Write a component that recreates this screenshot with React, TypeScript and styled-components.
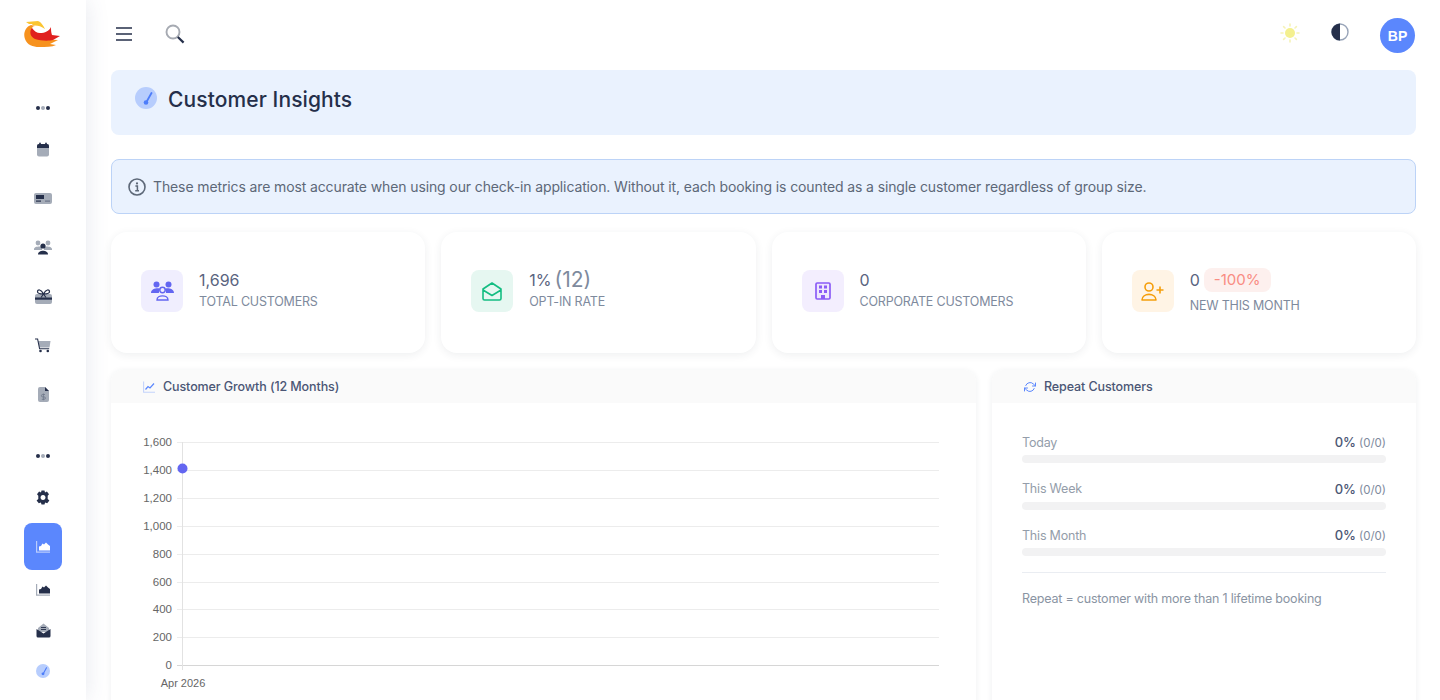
import React from "react";
import styled, { createGlobalStyle } from "styled-components";
import { FiRefreshCw } from "react-icons/fi";

const FONT = `"Inter", "Liberation Sans", sans-serif`;
const DARK = "#252f4a";
const MUTED = "#a5acb8";

const GlobalStyle = createGlobalStyle`
  html, body {
    margin: 0;
    height: 100%;
    overflow: hidden;
    background: #fff;
  }
  body {
    font-family: ${FONT};
  }
`;

const Shell = styled.div`
  display: flex;
  height: 700px;
  overflow: hidden;
`;

const Sidebar = styled.aside`
  width: 86px;
  flex: none;
  background: #fff;
  box-shadow: 0 0 22px rgba(60, 80, 120, 0.13);
  z-index: 2;
  display: flex;
  flex-direction: column;
  align-items: center;
`;

const LogoBox = styled.div`
  height: 90px;
  width: 100%;
  display: flex;
  justify-content: center;
  padding-top: 21px;
  box-sizing: border-box;
`;

const NavItem = styled.div<{ $h: number; $active?: boolean; $mt?: number }>`
  width: 38px;
  height: ${(p) => p.$h}px;
  margin-top: ${(p) => p.$mt ?? 0}px;
  flex: none;
  display: flex;
  align-items: center;
  justify-content: center;
  border-radius: 8px;
  background: ${(p) => (p.$active ? "#5b87fd" : "transparent")};
`;

const Main = styled.main`
  flex: 1;
  min-width: 0;
  padding: 0 24px 0 25px;
`;

const Topbar = styled.header`
  height: 70px;
  display: flex;
  align-items: center;
  gap: 32px;
`;

const TopLeft = styled.div`
  display: flex;
  align-items: center;
  gap: 33px;
  padding: 0 0 2px 5px;
  flex: 1;
`;

const TopRight = styled.div`
  display: flex;
  align-items: center;
  padding: 1px 1px 0 0;
`;

const ThemeIcon = styled.div<{ $mr: number; $up?: number }>`
  display: flex;
  margin-right: ${(p) => p.$mr}px;
  margin-top: -${(p) => p.$up ?? 0}px;
`;

const Avatar = styled.div`
  width: 35px;
  height: 35px;
  border-radius: 50%;
  background: #5b87fd;
  color: #fff;
  font: 700 14px "Liberation Sans", sans-serif;
  display: flex;
  align-items: center;
  justify-content: center;
`;

const PageHead = styled.div`
  height: 65px;
  box-sizing: border-box;
  padding: 17px 24px 0;
  border-radius: 8px;
  background: #eaf2fe;
  display: flex;
  align-items: flex-start;
  gap: 11px;
`;

const PageTitle = styled.h1`
  margin: -1px 0 0;
  font-size: 21px;
  line-height: 27px;
  font-weight: 500;
  letter-spacing: 0.1px;
  color: ${DARK};
`;

const Notice = styled.div`
  margin-top: 24px;
  height: 55px;
  box-sizing: border-box;
  border: 1px solid #bcd3f7;
  border-radius: 8px;
  background: #eaf2fe;
  padding: 0 16px;
  display: flex;
  align-items: center;
  gap: 7px;
  font-size: 14px;
  color: #5d6878;
  letter-spacing: -0.12px;
`;

const StatGrid = styled.section`
  margin-top: 18px;
  display: grid;
  grid-template-columns: repeat(4, 1fr);
  gap: 16px;
`;

const StatCard = styled.div`
  height: 121px;
  box-sizing: border-box;
  border-radius: 16px;
  background: #fff;
  box-shadow: 0 2px 8px rgba(40, 50, 70, 0.08);
  padding: 0 30px 3px;
  display: flex;
  align-items: center;
  gap: 16px;
`;

const StatIconBox = styled.div<{ $bg: string }>`
  width: 42px;
  height: 42px;
  flex: none;
  border-radius: 8px;
  background: ${(p) => p.$bg};
  display: flex;
  align-items: center;
  justify-content: center;
`;

const StatText = styled.div`
  margin-bottom: 3px;
`;

const StatValue = styled.div`
  display: flex;
  align-items: center;
  gap: 3px;
  font-size: 16px;
  line-height: 22px;
  color: #5a6480;
`;

const Sub = styled.span`
  font-size: 21px;
  color: #7e8a9d;
`;

const Badge = styled.span`
  height: 24px;
  margin: 2px 0 3px 1px;
  padding: 0 10px;
  border-radius: 8px;
  background: #fdf0ee;
  color: #f98c83;
  font-size: 15px;
  display: flex;
  align-items: center;
`;

const StatLabel = styled.div`
  margin-top: 2px;
  font-size: 12.5px;
  line-height: 17px;
  letter-spacing: -0.2px;
  text-transform: uppercase;
  color: #7e8a9d;
`;

const PanelRow = styled.section`
  margin-top: 17px;
  display: grid;
  grid-template-columns: 865px 1fr;
  gap: 16px;
`;

const Panel = styled.div`
  height: 420px;
  border-radius: 12px;
  background: #fff;
  box-shadow: 0 1px 6px rgba(40, 50, 70, 0.08);
  overflow: hidden;
`;

const PanelHead = styled.div`
  height: 33px;
  background: #fafafa;
  padding: 0 32px;
  display: flex;
  align-items: center;
  gap: 8px;
  font-size: 12.5px;
  font-weight: 500;
  letter-spacing: -0.1px;
  color: #4b5675;
`;

const ChartBody = styled.div`
  padding: 23px 0 0 0;
`;

const RepeatBody = styled.div`
  padding: 31px 30px 0;
`;

const RepeatRow = styled.div`
  & + & {
    margin-top: 17.5px;
  }
`;

const RepeatLine = styled.div`
  display: flex;
  justify-content: space-between;
  align-items: center;
  height: 16px;
  margin-bottom: 5px;
  font-size: 12.5px;
  letter-spacing: -0.2px;
  color: #949daa;
`;

const RepeatValue = styled.span`
  font-size: 13px;
  font-weight: 500;
  letter-spacing: 0;
  color: #4b5675;

  small {
    font-size: 11.5px;
    font-weight: 400;
    color: #7e8a9d;
    margin-left: 3px;
  }
`;

const Track = styled.div`
  height: 8px;
  border-radius: 4px;
  background: #f2f2f3;
`;

const Divider = styled.hr`
  margin: 16px 0 0;
  border: 0;
  border-top: 1px solid #eaedf2;
`;

const Note = styled.p`
  margin: 18px 0 0;
  font-size: 12.5px;
  line-height: 16px;
  letter-spacing: -0.2px;
  color: #8a94a3;
`;

const Dots = () => (
  <svg width="16" height="6" viewBox="0 0 16 6">
    <circle cx="3" cy="3" r="2" fill={DARK} />
    <circle cx="8" cy="3" r="2" fill={MUTED} />
    <circle cx="13" cy="3" r="2" fill={DARK} />
  </svg>
);

const Logo = () => (
  <svg width="38" height="28" viewBox="0 0 38 28">
    <path d="M2 1 L14 0 C17 1 19 4 21 8 C17 5 13 4 9 4.500 L8 3 L5 3 Z" fill="#fbc531" />
    <path d="M7 4 C1 6 -1 13 1 18 C3 24 9 26 15 26 C22 26 28 26 32 24 L26 23 L34 19 L14 18 C10 17 7 13 8 8 C8 6 9 5 11 5 Z" fill="#f7921e" />
    <path d="M8 7 C5 10 6 16 11 18 C17 20 25 20 29 19 L36 15 L28 14 C27 11 27 9 27 6 C25 10 21 12 16 12 C13 12 10 10 8 7 Z" fill="#e0201f" />
  </svg>
);

const CalendarIcon = () => (
  <svg width="14" height="15" viewBox="0 0 14 15">
    <rect x="1" y="2" width="12" height="12.500" rx="2" fill={MUTED} />
    <path d="M1 6 V4 a2 2 0 0 1 2 -2 h8 a2 2 0 0 1 2 2 v2 z" fill={DARK} />
    <rect x="3.200" y="0.500" width="1.600" height="3" rx=".8" fill={DARK} />
    <rect x="9.200" y="0.500" width="1.600" height="3" rx=".8" fill={DARK} />
  </svg>
);

const TicketIcon = () => (
  <svg width="18" height="11" viewBox="0 0 18 11">
    <rect width="18" height="11" rx="2" fill={MUTED} />
    <rect x="2" y="2" width="8" height="4" fill={DARK} />
    <rect x="2" y="7.500" width="5" height="1.200" fill={DARK} />
    <rect x="11" y="7.500" width="5" height="1.200" fill="#6d7689" />
  </svg>
);

const PeopleIcon = () => (
  <svg width="18" height="15" viewBox="0 0 18 15">
    <circle cx="4" cy="3" r="2.400" fill={MUTED} />
    <circle cx="14" cy="3" r="2.400" fill={MUTED} />
    <path d="M0 9 C0 6 7 6 8 7 L8 10 H0 Z M18 9 C18 6 11 6 10 7 L10 10 H18 Z" fill={MUTED} />
    <circle cx="9" cy="6" r="2.600" fill={DARK} />
    <path d="M4 14.500 C4 9.500 14 9.500 14 14.500 Z" fill={DARK} />
  </svg>
);

const GiftIcon = () => (
  <svg width="17" height="15" viewBox="0 0 17 15">
    <rect y="5" width="17" height="10" rx="2" fill={MUTED} />
    <rect y="8.500" width="17" height="2.200" fill={DARK} />
    <path d="M8.500 5 C6 0 2.500 0 2.500 2.800 C2.500 5 6 5 8.500 5 C11 5 14.500 5 14.500 2.800 C14.500 0 11 0 8.500 5 L6 8.500 M8.500 5 L11 8.500" fill="none" stroke={DARK} strokeWidth="1.200" />
  </svg>
);

const CartIcon = () => (
  <svg width="16" height="15" viewBox="0 0 16 15">
    <path d="M3 3 H15.500 L14.500 9.500 H4.500 Z" fill={MUTED} />
    <path d="M0 1 H2.600 L4.600 10.800 H14.200" fill="none" stroke={DARK} strokeWidth="1.100" />
    <circle cx="5.500" cy="13" r="1.300" fill={DARK} />
    <circle cx="12.800" cy="13" r="1.300" fill={DARK} />
  </svg>
);

const DocIcon = () => (
  <svg width="11" height="15" viewBox="0 0 11 15">
    <path d="M2 0 H7 L11 4 V13 a2 2 0 0 1 -2 2 H2 a2 2 0 0 1 -2 -2 V2 a2 2 0 0 1 2 -2 Z" fill={MUTED} />
    <path d="M7 0 L11 4 H7 Z" fill={DARK} />
    <path d="M7 7.500 H4.600 a1 1 0 0 0 0 2.400 H6.200 a1 1 0 0 1 0 2.400 H3.800 M5.400 6.500 V13.200" fill="none" stroke="#6d7689" strokeWidth=".8" />
  </svg>
);

const GearIcon = () => (
  <svg width="14" height="15" viewBox="0 0 14 15">
    <path fillRule="evenodd" fill={DARK} d="M5.500 0.500 H8.500 L9 2.400 L10.900 1.500 L13 4.200 L11.700 5.800 L11.700 8.900 L13.400 10.500 L11.200 13.300 L9.100 12.600 L8.500 14.500 H5.500 L4.900 12.600 L2.800 13.300 L.6 10.500 L2.300 8.900 L2.300 5.800 L1 4.200 L3.100 1.500 L5 2.400 Z M7 5 a2.500 2.500 0 1 0 .01 0 Z" />
  </svg>
);

const AreaChartIcon = ({ main, axis }: { main: string; axis: string }) => (
  <svg width="14" height="12" viewBox="0 0 14 12">
    <path d="M0.600 0 V11.200 H14" fill="none" stroke={axis} strokeWidth="1.200" />
    <path d="M3 9.500 V5.500 L5 5 L6.500 2.500 L8 3.500 L10 1.500 L12 3.500 L14 5 V9.500 Z" fill={main} />
  </svg>
);

const MailIcon = () => (
  <svg width="15" height="15" viewBox="0 0 15 15">
    <path d="M2 5 L7.500 0.500 L13 5 V9 H2 Z" fill={MUTED} />
    <path d="M5 4.500 H10 M5 6.500 H10" stroke={DARK} strokeWidth=".9" />
    <path d="M0.500 6 L7.500 10.500 L14.500 6 V13 a1.500 1.500 0 0 1 -1.500 1.500 H2 a1.500 1.500 0 0 1 -1.500 -1.500 Z" fill={DARK} />
  </svg>
);

const Gauge = ({ size }: { size: number }) => (
  <svg width={size} height={size} viewBox="0 0 22 22">
    <circle cx="11" cy="11" r="11" fill="#b7cdfd" />
    <path d="M16.500 6 L12 14" stroke="#4d7dfa" strokeWidth="1.800" strokeLinecap="round" />
    <circle cx="11" cy="15.500" r="2.300" fill="#4d7dfa" />
  </svg>
);

const Hamburger = () => (
  <svg width="16" height="14" viewBox="0 0 16 14">
    <path d="M0 1 H16 M0 7 H16 M0 13 H16" stroke={DARK} strokeWidth="1.600" />
  </svg>
);

const Search = () => (
  <svg width="20" height="20" viewBox="0 0 20 20">
    <circle cx="8" cy="8" r="6.500" fill="none" stroke="#a6aab2" strokeWidth="1.900" />
    <path d="M12.800 13 L18.600 18.600" stroke={DARK} strokeWidth="2.200" />
  </svg>
);

const Sun = () => (
  <svg width="20" height="20" viewBox="0 0 20 20">
    <circle cx="10" cy="10" r="5" fill="#f4f08e" />
    <path
      d="M10 1 V3 M10 17 V19 M1 10 H3 M17 10 H19 M3.600 3.600 L5 5 M15 15 L16.400 16.400 M3.600 16.400 L5 15 M15 5 L16.400 3.600"
      stroke="#f6f3b8"
      strokeWidth="1.600"
      strokeLinecap="round"
    />
  </svg>
);

const Contrast = () => (
  <svg width="18" height="18" viewBox="0 0 18 18">
    <circle cx="9" cy="9" r="8" fill="#fff" stroke="#98a4b8" strokeWidth="1.400" />
    <path d="M9 0.400 a8.600 8.600 0 0 0 0 17.200 Z" fill={DARK} />
  </svg>
);

const InfoIcon = () => (
  <svg width="18" height="18" viewBox="0 0 18 18">
    <circle cx="9" cy="9" r="8" fill="none" stroke="#5d6878" strokeWidth="1.600" />
    <circle cx="9" cy="5.400" r="1.100" fill="#5d6878" />
    <path d="M7.400 8 H9.400 V12.600 M7.200 12.800 H11" fill="none" stroke="#5d6878" strokeWidth="1.500" />
  </svg>
);

const TrendIcon = () => (
  <svg width="12" height="12" viewBox="0 0 12 12">
    <path d="M0.600 0.500 V11.200 H12" fill="none" stroke="#c4d3fb" strokeWidth="1.100" />
    <path d="M2.500 8.500 L5 5.500 L7 7 L11 2.500" fill="none" stroke="#5b87fd" strokeWidth="1.200" />
  </svg>
);

const UsersStat = () => (
  <svg width="23" height="20" viewBox="0 0 23 20">
    <circle cx="5.500" cy="3.500" r="3" fill="#6366f1" />
    <circle cx="17.500" cy="3.500" r="3" fill="#6366f1" />
    <path d="M0 12 C0 7 8 6.500 9.500 8 C8 9.500 7.800 11 8 12 Z M23 12 C23 7 15 6.500 13.500 8 C15 9.500 15.200 11 15 12 Z" fill="#6366f1" />
    <circle cx="11.500" cy="9" r="2.700" fill="none" stroke="#6366f1" strokeWidth="1.400" />
    <path d="M6 19 C6 13.500 17 13.500 17 19 Z" fill="none" stroke="#6366f1" strokeWidth="1.400" />
  </svg>
);

const EnvelopeStat = () => (
  <svg width="20" height="19" viewBox="0 0 20 19">
    <path
      d="M1 7 L10 1 L19 7 V16.500 a1.500 1.500 0 0 1 -1.500 1.500 H2.500 a1.500 1.500 0 0 1 -1.500 -1.500 Z M1 8 L10 13.500 L19 8"
      fill="none"
      stroke="#14bd82"
      strokeWidth="1.600"
      strokeLinejoin="round"
    />
  </svg>
);

const BuildingStat = () => (
  <svg width="16" height="18" viewBox="0 0 16 18">
    <rect x="1" y="1" width="14" height="16" rx="1.200" fill="#ede7fd" stroke="#8b5cf6" strokeWidth="1.700" />
    <rect x="4" y="3.500" width="3" height="3" fill="#8b5cf6" />
    <rect x="9" y="3.500" width="3" height="3" fill="#8b5cf6" />
    <rect x="4" y="8" width="3" height="3" fill="#8b5cf6" />
    <rect x="9" y="8" width="3" height="3" fill="#8b5cf6" />
    <rect x="6" y="13" width="4" height="4" fill="#8b5cf6" />
  </svg>
);

const UserPlusStat = () => (
  <svg width="23" height="19" viewBox="0 0 23 19">
    <circle cx="8" cy="5" r="4" fill="none" stroke="#f59e0b" strokeWidth="1.600" />
    <path d="M1 18 C1 10.500 15 10.500 15 18 Z" fill="none" stroke="#f59e0b" strokeWidth="1.600" strokeLinejoin="round" />
    <path d="M15.500 8 H22.500 M19 4.500 V11.500" stroke="#f59e0b" strokeWidth="1.600" />
  </svg>
);

const TICKS = ["1,600", "1,400", "1,200", "1,000", "800", "600", "400", "200", "0"];
const CHART_TOP = 16;
const STEP = 27.9;

const GrowthChart = () => (
  <svg width="865" height="280" viewBox="0 0 865 280">
    {TICKS.map((t, i) => {
      const y = Math.round(CHART_TOP + i * STEP) + 0.5;
      const isAxis = i === TICKS.length - 1;
      return (
        <g key={t}>
          <line x1="66" x2="828" y1={y} y2={y} stroke={isAxis ? "#d6d6d6" : "#ececec"} />
          <text x="61" y={y + 3.5} textAnchor="end" fontFamily="Liberation Sans" fontSize="11.500" fill="#666">
            {t}
          </text>
        </g>
      );
    })}
    <line x1="71.500" x2="71.500" y1={CHART_TOP} y2="244" stroke="#e2e2e2" />
    <text x="72" y="261" textAnchor="middle" fontFamily="Liberation Sans" fontSize="11" fill="#666">
      Apr 2026
    </text>
    <circle cx="71.500" cy="42.500" r="5" fill="#6366f1" />
  </svg>
);

const STATS = [
  { bg: "#f0eefe", icon: <UsersStat />, label: "Total Customers", value: <>1,696</> },
  { bg: "#e6f7f1", icon: <EnvelopeStat />, label: "Opt-in Rate", value: <>1% <Sub>(12)</Sub></> },
  { bg: "#f3eefe", icon: <BuildingStat />, label: "Corporate Customers", value: <>0</> },
  { bg: "#fff4e5", icon: <UserPlusStat />, label: "New This Month", value: <>0 <Badge>-100%</Badge></> },
];

const REPEATS = ["Today", "This Week", "This Month"];

export default function App() {
  return (
    <>
      <GlobalStyle />
      <Shell>
        <Sidebar>
          <LogoBox>
            <Logo />
          </LogoBox>
          <NavItem $h={35}><Dots /></NavItem>
          <NavItem $h={49}><CalendarIcon /></NavItem>
          <NavItem $h={49}><TicketIcon /></NavItem>
          <NavItem $h={49}><PeopleIcon /></NavItem>
          <NavItem $h={49}><GiftIcon /></NavItem>
          <NavItem $h={49}><CartIcon /></NavItem>
          <NavItem $h={49}><DocIcon /></NavItem>
          <NavItem $h={35} $mt={19}><Dots /></NavItem>
          <NavItem $h={48}><GearIcon /></NavItem>
          <NavItem $h={47} $mt={2} $active><AreaChartIcon main="#fff" axis="#b9ccfd" /></NavItem>
          <NavItem $h={40}><AreaChartIcon main={DARK} axis={MUTED} /></NavItem>
          <NavItem $h={41}><MailIcon /></NavItem>
          <NavItem $h={39}><Gauge size={14} /></NavItem>
        </Sidebar>
        <Main>
          <Topbar>
            <TopLeft>
              <Hamburger />
              <Search />
            </TopLeft>
            <TopRight>
              <ThemeIcon $mr={31} $up={5}><Sun /></ThemeIcon>
              <ThemeIcon $mr={31} $up={8}><Contrast /></ThemeIcon>
              <Avatar>BP</Avatar>
            </TopRight>
          </Topbar>
          <PageHead>
            <Gauge size={22} />
            <PageTitle>Customer Insights</PageTitle>
          </PageHead>
          <Notice>
            <InfoIcon />
            These metrics are most accurate when using our check-in application. Without it, each booking is counted as a single customer regardless of group size.
          </Notice>
          <StatGrid>
            {STATS.map((s) => (
              <StatCard key={s.label}>
                <StatIconBox $bg={s.bg}>{s.icon}</StatIconBox>
                <StatText>
                  <StatValue>{s.value}</StatValue>
                  <StatLabel>{s.label}</StatLabel>
                </StatText>
              </StatCard>
            ))}
          </StatGrid>
          <PanelRow>
            <Panel>
              <PanelHead>
                <TrendIcon />
                Customer Growth (12 Months)
              </PanelHead>
              <ChartBody>
                <GrowthChart />
              </ChartBody>
            </Panel>
            <Panel>
              <PanelHead>
                <FiRefreshCw size={12} color="#5b87fd" />
                Repeat Customers
              </PanelHead>
              <RepeatBody>
                {REPEATS.map((r) => (
                  <RepeatRow key={r}>
                    <RepeatLine>
                      {r}
                      <RepeatValue>0%<small>(0/0)</small></RepeatValue>
                    </RepeatLine>
                    <Track />
                  </RepeatRow>
                ))}
                <Divider />
                <Note>Repeat = customer with more than 1 lifetime booking</Note>
              </RepeatBody>
            </Panel>
          </PanelRow>
        </Main>
      </Shell>
    </>
  );
}
